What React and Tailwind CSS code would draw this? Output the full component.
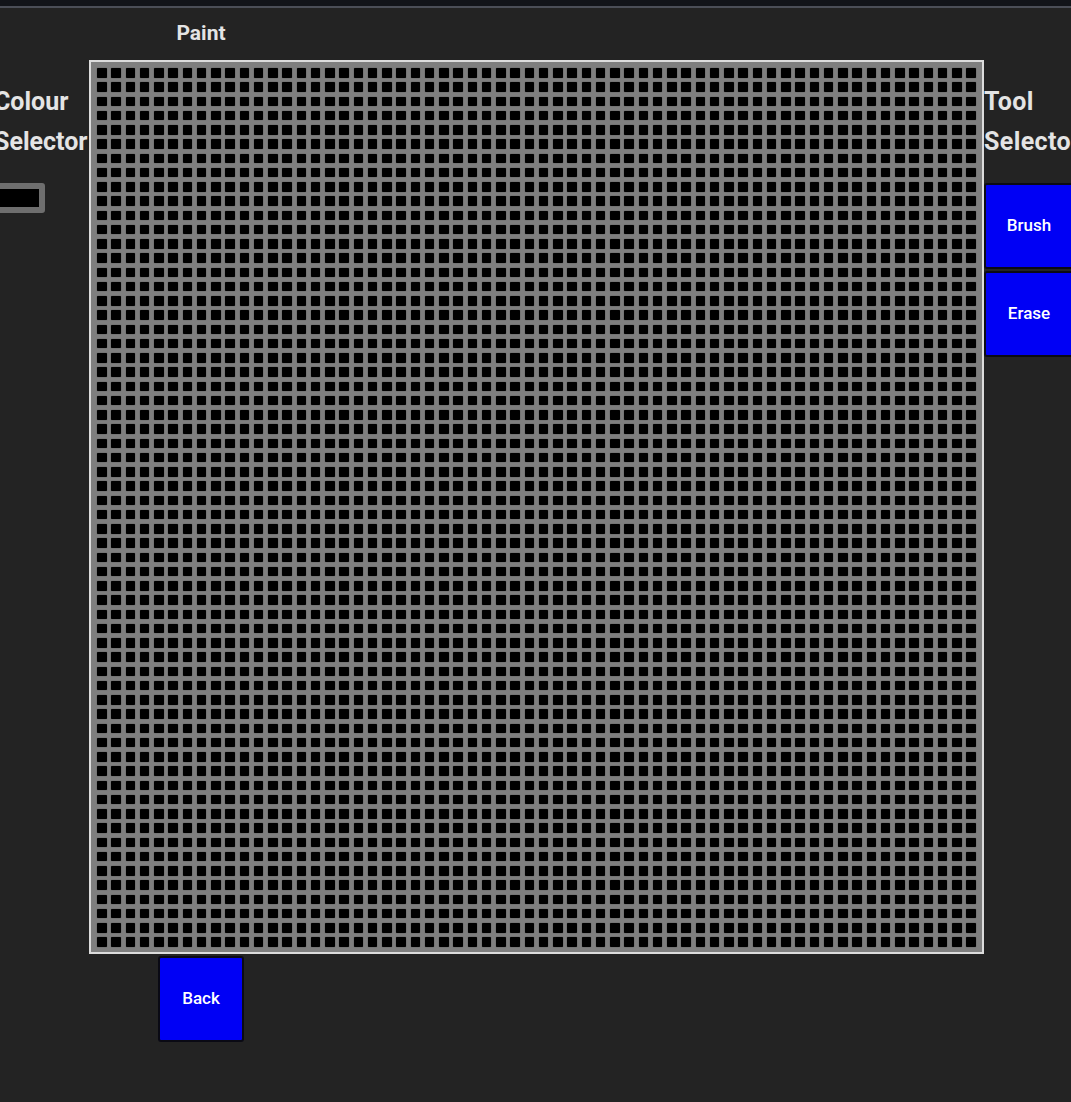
const SIZE = 62
const cells = Array.from({ length: SIZE * SIZE }, (_, i) => i)

function ToolButton({ label, w = 'w-[90px]' }) {
  return (
    <button className={`${w} h-[86px] bg-[#0000f5] border-2 border-[#0a0a14] rounded-[3px] text-white text-[17px] font-medium flex items-center justify-center`}>
      {label}
    </button>
  )
}

export default function App() {
  return (
    <div className="w-[1071px] h-[1102px] overflow-hidden bg-[#232323] text-[#e4e4e4] font-['Roboto',sans-serif]">
      {/* top strip */}
      <div className="h-[6px] bg-[#121419]" />
      <div className="h-[2px] bg-[#4b4e57]" />

      {/* title */}
      <div className="ml-[158px] w-[86px] pt-[11px] h-[52px] text-center text-[21px] leading-[28px] font-bold">
        Paint
      </div>

      <div className="flex items-start">
        {/* colour selector */}
        <div className="w-[95px] -ml-[6px] pt-[22px] shrink-0">
          <p className="text-[25px] leading-[40px] font-bold w-[80px]">Colour Selector</p>
          <div className="mt-[21px] w-[51px] h-[30px] border-[6px] border-[#6e6e6e] rounded-[3px] bg-black" />
        </div>

        {/* canvas */}
        <div className="shrink-0 w-[895px] h-[894px] border-2 border-[#dcdcdc] bg-[#7f7f7f] pt-[6px] pl-[6px]">
          <div className="grid grid-cols-[repeat(62,9.5px)] auto-rows-[9.5px] gap-[4.75px]">
            {cells.map(i => (
              <div key={i} className="bg-black rounded-[1px] shadow-[0_0_1px_#222]" />
            ))}
          </div>
        </div>

        {/* tool selector */}
        <div className="pt-[22px] shrink-0">
          <p className="text-[25px] leading-[40px] font-bold tracking-[0.4px] w-[80px] whitespace-pre-line">{'Tool\nSelector'}</p>
          <div className="mt-[21px] flex flex-col gap-[2px]">
            <ToolButton label="Brush" />
            <ToolButton label="Erase" />
          </div>
        </div>
      </div>

      <div className="ml-[158px] mt-[2px]">
        <ToolButton label="Back" w="w-[86px]" />
      </div>
    </div>
  )
}
